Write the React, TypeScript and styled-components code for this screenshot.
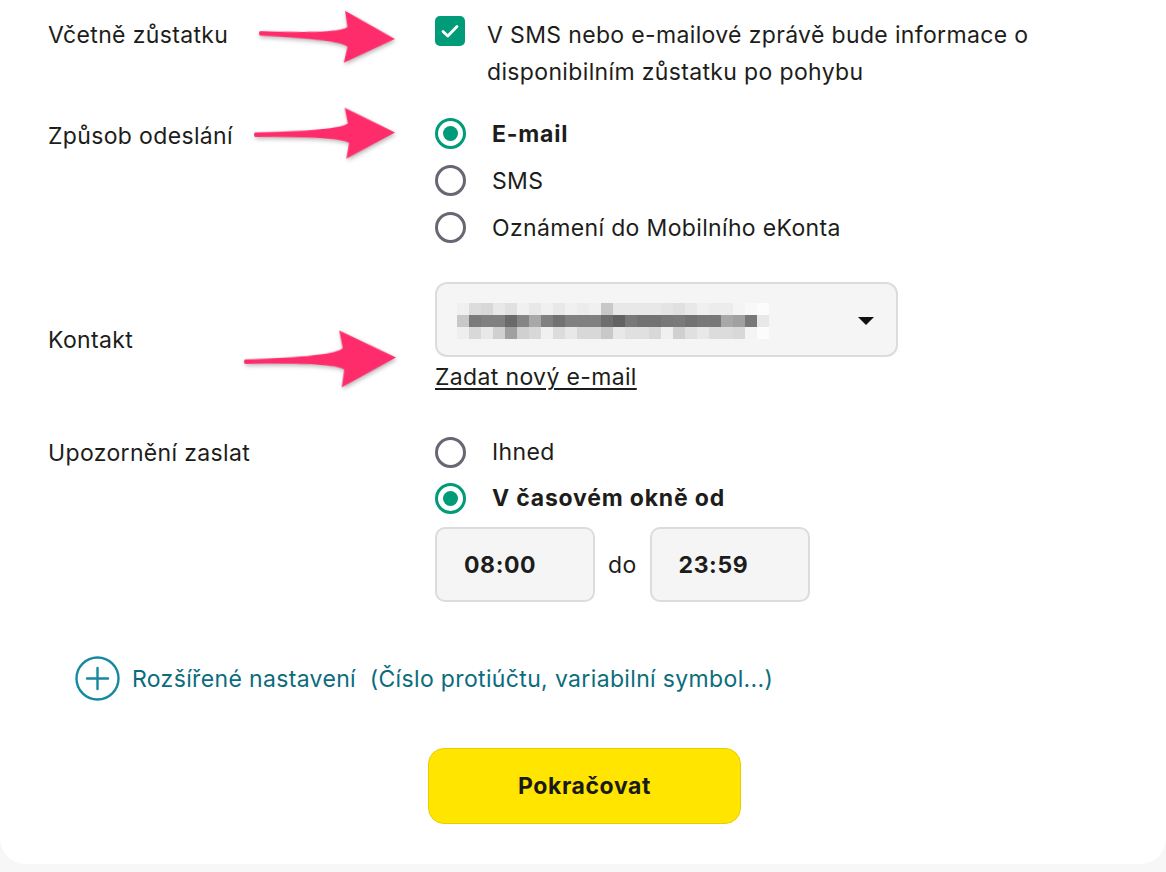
import React from "react";
import styled, { createGlobalStyle } from "styled-components";

const GlobalStyle = createGlobalStyle`
  html, body {
    margin: 0;
    padding: 0;
    background: #f7f7f7;
  }
  body {
    font-family: Inter, "Noto Sans", sans-serif;
    color: #1d1d1b;
    letter-spacing: 0.35px;
    -webkit-font-smoothing: antialiased;
  }
`;

const Card = styled.main`
  position: relative;
  box-sizing: border-box;
  min-height: 864px;
  padding-top: 17px;
  background: #ffffff;
  border-radius: 0 0 26px 26px;
`;

const Form = styled.div`
  display: flex;
  flex-direction: column;
  padding-left: 48px;
`;

const Row = styled.section<{ $gap: number; $align?: string }>`
  display: grid;
  grid-template-columns: 387px 1fr;
  align-items: ${(p) => p.$align || "start"};
  margin-top: ${(p) => p.$gap}px;
`;

const Label = styled.div<{ $offset?: number }>`
  font-size: 23px;
  line-height: 37px;
  padding-top: ${(p) => p.$offset || 0}px;
`;

const CheckRow = styled.label`
  display: flex;
  align-items: flex-start;
  gap: 22px;
`;

const CheckBox = styled.span`
  flex: 0 0 30px;
  width: 30px;
  height: 30px;
  margin-top: -1px;
  border-radius: 5px;
  background: #009b78;
  display: flex;
  align-items: center;
  justify-content: center;
`;

const CheckText = styled.span`
  max-width: 600px;
  font-size: 23px;
  line-height: 37px;
`;

const RadioList = styled.div`
  display: flex;
  flex-direction: column;
`;

const RadioItem = styled.label<{ $height: number }>`
  display: flex;
  align-items: center;
  gap: 26px;
  height: ${(p) => p.$height}px;
`;

const RadioDot = styled.span<{ $checked?: boolean }>`
  box-sizing: border-box;
  width: 31px;
  height: 31px;
  border-radius: 50%;
  border: 3px solid ${(p) => (p.$checked ? "#009b78" : "#676774")};
  display: flex;
  align-items: center;
  justify-content: center;
  &::after {
    content: "";
    display: ${(p) => (p.$checked ? "block" : "none")};
    width: 15px;
    height: 15px;
    border-radius: 50%;
    background: #009b78;
  }
`;

const RadioText = styled.span<{ $bold?: boolean }>`
  font-size: 23px;
  font-weight: ${(p) => (p.$bold ? 700 : 400)};
  letter-spacing: ${(p) => (p.$bold ? "0.8px" : "0.35px")};
`;

const Contact = styled.div`
  display: flex;
  flex-direction: column;
  align-items: flex-start;
`;

const Select = styled.div`
  box-sizing: border-box;
  width: 463px;
  height: 75px;
  padding: 0 22px 0 20px;
  border: 2px solid #dcdcdc;
  border-radius: 12px;
  background: #f5f5f5;
  display: flex;
  align-items: center;
  justify-content: space-between;
`;

const Blur = styled.div`
  display: grid;
  grid-template-columns: repeat(26, 12px);
  grid-auto-rows: 12px;
  margin-top: 2px;
`;

const Pixel = styled.span<{ $shade: number }>`
  background: ${(p) => `rgb(${p.$shade}, ${p.$shade}, ${p.$shade})`};
`;

const Caret = styled.span`
  width: 0;
  height: 0;
  border-left: 8px solid transparent;
  border-right: 8px solid transparent;
  border-top: 8px solid #111;
  margin-top: 2px;
`;

const TextLink = styled.a`
  font-size: 23px;
  line-height: 40px;
  color: #1d1d1b;
  text-decoration: underline;
  text-underline-offset: 3px;
  text-decoration-thickness: 1.5px;
`;

const TimeRow = styled.div`
  display: flex;
  align-items: center;
  gap: 13px;
  margin-top: 6px;
`;

const TimeBox = styled.div`
  box-sizing: border-box;
  width: 160px;
  height: 75px;
  padding-left: 27px;
  border: 2px solid #dcdcdc;
  border-radius: 10px;
  background: #f5f5f5;
  display: flex;
  align-items: center;
  font-size: 23px;
  font-weight: 700;
  letter-spacing: 0.6px;
`;

const TimeSep = styled.span`
  font-size: 23px;
`;

const Advanced = styled.a`
  display: flex;
  align-items: center;
  gap: 12px;
  margin: 54px 0 0 27px;
  font-size: 23px;
  color: #0b6c7e;
  text-decoration: none;
`;

const Footer = styled.div`
  display: flex;
  justify-content: center;
  margin-top: 47px;
  padding-left: 3px;
`;

const Button = styled.button`
  width: 313px;
  height: 76px;
  border: 1px solid #e6cf00;
  border-radius: 16px;
  background: #ffe500;
  font-family: inherit;
  font-size: 23px;
  font-weight: 700;
  letter-spacing: 0.6px;
  color: #1a1a1a;
`;

const ArrowSvg = styled.svg<{ $x: number; $y: number; $c: number; $angle: number }>`
  position: absolute;
  left: ${(p) => p.$x}px;
  top: ${(p) => p.$y - p.$c}px;
  transform: rotate(${(p) => p.$angle}deg);
  transform-origin: 0 ${(p) => p.$c}px;
  overflow: visible;
  filter: drop-shadow(1px 2px 2px rgba(0, 0, 0, 0.28));
`;

type ArrowProps = { x: number; y: number; length: number; angle: number; head: number };

const Arrow = ({ x, y, length, angle, head }: ArrowProps) => {
  const L = length;
  const half = head / 2;
  const c = half + 4;
  const w = head * 0.19;
  const d = [
    `M 2 ${c - 2}`,
    `Q ${L * 0.6} ${c - 2.5} ${L - head + 4} ${c - w}`,
    `L ${L - head + 1} ${c - half}`,
    `L ${L} ${c}`,
    `L ${L - head + 2} ${c + half}`,
    `L ${L - head + 5} ${c + w}`,
    `Q ${L * 0.6} ${c + 3} 2 ${c + 2.5}`,
    `Q 0 ${c} 2 ${c - 2}`,
    "Z",
  ].join(" ");
  return (
    <ArrowSvg
      $x={x}
      $y={y}
      $c={c}
      $angle={angle}
      width={L + 2}
      height={head + 8}
      viewBox={`0 0 ${L + 2} ${head + 8}`}
    >
      <path d={d} fill="#ff2c6b" />
    </ArrowSvg>
  );
};

// pixelated (blurred) e-mail address in the select
const blurRows = [
  [240, 220, 216, 232, 224, 240, 232, 240, 232, 240, 236, 240, 200, 232, 232, 232, 232, 228, 224, 232, 240, 236, 236, 244, 248, 252],
  [200, 122, 128, 128, 106, 133, 168, 128, 114, 128, 128, 128, 110, 98, 120, 114, 114, 120, 122, 114, 120, 120, 168, 160, 120, 232],
  [238, 216, 232, 208, 160, 208, 216, 240, 220, 232, 216, 216, 200, 232, 224, 224, 216, 240, 208, 224, 232, 220, 220, 216, 244, 252],
];

const PlusIcon = () => (
  <svg width="45" height="45" viewBox="0 0 45 45">
    <circle cx="22.5" cy="22.5" r="21" fill="none" stroke="#1589a0" strokeWidth="2.4" />
    <path d="M22.5 12 V33 M12 22.5 H33" stroke="#1589a0" strokeWidth="2.4" strokeLinecap="round" />
  </svg>
);

const CheckMark = () => (
  <svg width="18" height="14" viewBox="0 0 18 14">
    <path d="M2 7.5 L6.8 12 L16 2.5" fill="none" stroke="#fff" strokeWidth="2.8" strokeLinecap="round" strokeLinejoin="round" />
  </svg>
);

const App = () => {
  return (
    <>
      <GlobalStyle />
      <Card>
        <Form>
          <Row $gap={0}>
            <Label>Včetně zůstatku</Label>
            <CheckRow>
              <CheckBox>
                <CheckMark />
              </CheckBox>
              <CheckText>
                V SMS nebo e-mailové zprávě bude informace o disponibilním zůstatku po pohybu
              </CheckText>
            </CheckRow>
          </Row>

          <Row $gap={19}>
            <Label $offset={8}>Způsob odeslání</Label>
            <RadioList>
              <RadioItem $height={47}>
                <RadioDot $checked />
                <RadioText $bold>E-mail</RadioText>
              </RadioItem>
              <RadioItem $height={47}>
                <RadioDot />
                <RadioText>SMS</RadioText>
              </RadioItem>
              <RadioItem $height={47}>
                <RadioDot />
                <RadioText>Oznámení do Mobilního eKonta</RadioText>
              </RadioItem>
            </RadioList>
          </Row>

          <Row $gap={31} $align="center">
            <Label $offset={2}>Kontakt</Label>
            <Contact>
              <Select>
                <Blur>
                  {blurRows.map((row, r) =>
                    row.map((shade, i) => <Pixel key={`${r}-${i}`} $shade={shade} />)
                  )}
                </Blur>
                <Caret />
              </Select>
              <TextLink href="#">Zadat nový e-mail</TextLink>
            </Contact>
          </Row>

          <Row $gap={32}>
            <Label $offset={6}>Upozornění zaslat</Label>
            <div>
              <RadioList>
                <RadioItem $height={46}>
                  <RadioDot />
                  <RadioText>Ihned</RadioText>
                </RadioItem>
                <RadioItem $height={46}>
                  <RadioDot $checked />
                  <RadioText $bold>V časovém okně od</RadioText>
                </RadioItem>
              </RadioList>
              <TimeRow>
                <TimeBox>08:00</TimeBox>
                <TimeSep>do</TimeSep>
                <TimeBox>23:59</TimeBox>
              </TimeRow>
            </div>
          </Row>

          <Advanced href="#">
            <PlusIcon />
            <span>Rozšířené nastavení&nbsp; (Číslo protiúčtu, variabilní symbol...)</span>
          </Advanced>
        </Form>

        <Footer>
          <Button type="button">Pokračovat</Button>
        </Footer>

        <Arrow x={258} y={33} length={137} angle={2.5} head={52} />
        <Arrow x={253} y={134} length={142} angle={-0.8} head={51} />
        <Arrow x={243} y={361} length={153} angle={-1.5} head={57} />
      </Card>
    </>
  );
};

export default App;
